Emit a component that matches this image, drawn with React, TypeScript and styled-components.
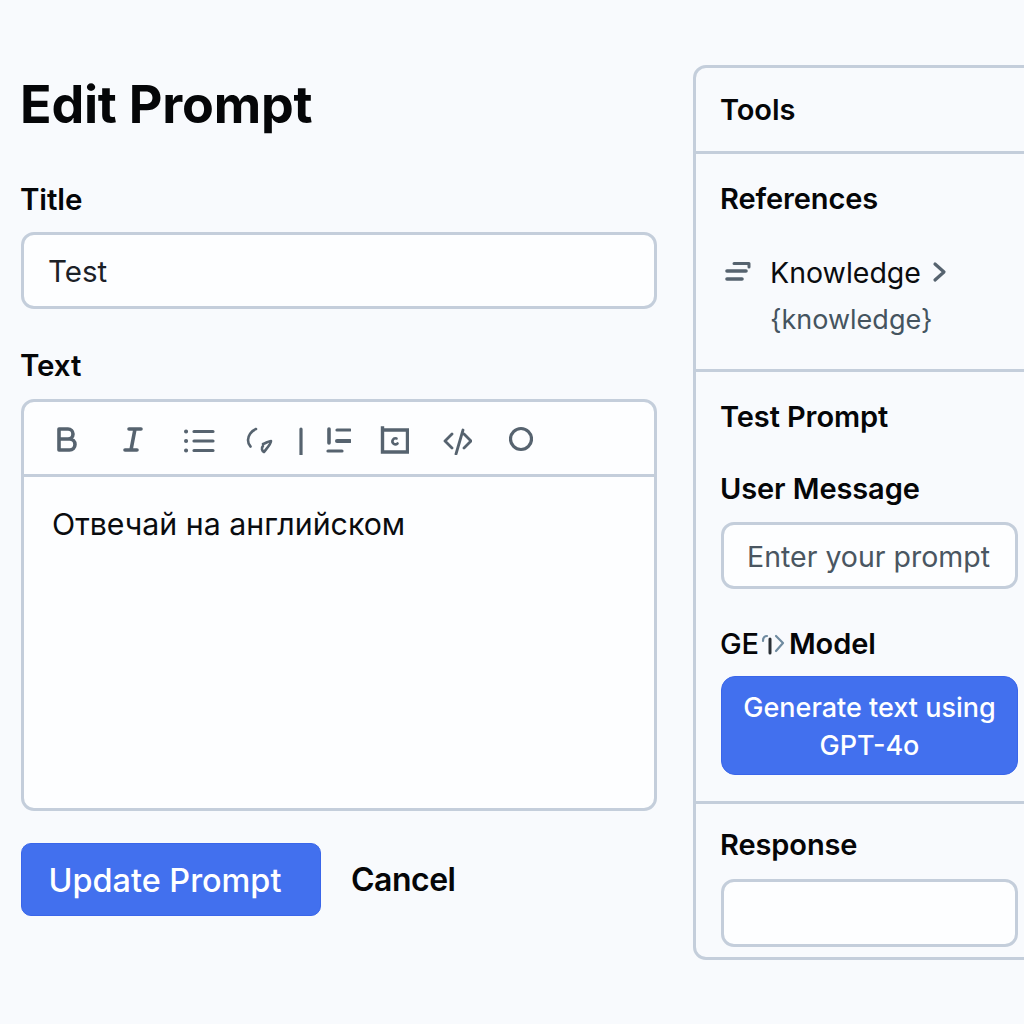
import React from 'react';
import styled, { createGlobalStyle } from 'styled-components';

const GlobalStyle = createGlobalStyle`
  html, body {
    margin: 0;
    padding: 0;
    background: #f8fafd;
    font-family: Inter, "Liberation Sans", sans-serif;
    color: #050608;
  }
  * { box-sizing: border-box; }
`;

const BORDER = '#c4cedb';
const ICON = '#56636f';

const Page = styled.div`
  width: 1024px;
  height: 1024px;
  overflow: hidden;
  display: flex;
  align-items: flex-start;
  gap: 36px;
  padding: 65px 0 0 21px;
`;

const Form = styled.div`
  width: 636px;
  flex-shrink: 0;
  display: flex;
  flex-direction: column;
`;

const Heading = styled.h1`
  margin: 9px 0 0 -1px;
  font-size: 52px;
  line-height: 62px;
  font-weight: 700;
  letter-spacing: -0.2px;
`;

const Label = styled.div<{ $top?: number }>`
  font-size: 29px;
  line-height: 34px;
  font-weight: 600;
  letter-spacing: -0.1px;
  margin-top: ${(p) => p.$top ?? 0}px;
`;

const FormLabel = styled(Label)`
  margin-left: -1px;
  font-size: 29.5px;
`;

const TitleInput = styled.div`
  margin-top: 16px;
  height: 77px;
  border: 3px solid ${BORDER};
  border-radius: 13px;
  background: #fdfeff;
  padding: 0 24px;
  display: flex;
  align-items: center;
  font-size: 29.5px;
  color: #1c2127;
`;

const Editor = styled.div`
  margin-top: 17px;
  height: 412px;
  border: 3px solid ${BORDER};
  border-radius: 13px;
  background: #fdfeff;
  display: flex;
  flex-direction: column;
`;

const Toolbar = styled.div`
  height: 75px;
  flex-shrink: 0;
  border-bottom: 3px solid ${BORDER};
  display: flex;
  align-items: center;
  padding: 1px 0 0 31px;
  color: ${ICON};
`;

const ToolIcon = styled.svg<{ $w: number; $gap: number }>`
  width: ${(p) => p.$w}px;
  height: 32px;
  margin-right: ${(p) => p.$gap}px;
  flex-shrink: 0;
  fill: none;
  stroke: currentColor;
  stroke-width: 3.2;
  stroke-linecap: round;
  stroke-linejoin: round;
`;

const EditorBody = styled.div`
  padding: 29px 28px;
  font-size: 30.3px;
  line-height: 36px;
  color: #0a0c0f;
`;

const Actions = styled.div`
  margin-top: 32px;
  display: flex;
  align-items: center;
  gap: 30px;
`;

const PrimaryButton = styled.button<{ $wide?: boolean }>`
  border: 1px solid #3a66ea;
  background: #4270ee;
  color: #fff;
  font-family: inherit;
  font-weight: 500;
  border-radius: ${(p) => (p.$wide ? 14 : 10)}px;
  width: ${(p) => (p.$wide ? 297 : 300)}px;
  height: ${(p) => (p.$wide ? 99 : 73)}px;
  font-size: ${(p) => (p.$wide ? 27 : 32.4)}px;
  line-height: ${(p) => (p.$wide ? 38 : 40)}px;
  padding: ${(p) => (p.$wide ? '3px 16px 0' : '2px 12px 0 0')};
`;

const CancelLink = styled.span`
  font-size: 32px;
  font-weight: 600;
  letter-spacing: -0.5px;
`;

const Panel = styled.aside`
  width: 360px;
  height: 895px;
  flex-shrink: 0;
  border: 3px solid ${BORDER};
  border-radius: 13px;
  display: flex;
  flex-direction: column;
`;

const Section = styled.section<{ $h: number; $top: number }>`
  height: ${(p) => p.$h}px;
  padding: ${(p) => p.$top}px 0 0 24px;
  flex-shrink: 0;
  & + & { border-top: 3px solid ${BORDER}; }
`;

const KnowledgeRow = styled.div`
  margin-top: 36px;
  display: flex;
  align-items: center;
  height: 40px;
  font-size: 28.5px;
  color: #0a0c0f;
`;

const KnowledgeIcon = styled.svg`
  width: 27px;
  height: 24px;
  margin-left: 4px;
  margin-right: 19px;
  fill: none;
  stroke: ${ICON};
  stroke-width: 3.6;
  stroke-linecap: round;
  stroke-linejoin: round;
`;

const Chevron = styled.svg`
  width: 16px;
  height: 24px;
  margin-left: 11px;
  fill: none;
  stroke: ${ICON};
  stroke-width: 3.2;
  stroke-linecap: round;
  stroke-linejoin: round;
`;

const KnowledgeTag = styled.div`
  margin: 10px 0 0 50px;
  font-size: 27px;
  line-height: 36px;
  color: #45545f;
`;

const FieldBox = styled.div<{ $h: number; $top: number }>`
  width: 297px;
  height: ${(p) => p.$h}px;
  margin: ${(p) => p.$top}px 0 0 1px;
  border: 3px solid ${BORDER};
  border-radius: 13px;
  background: #fdfeff;
  padding: 2px 23px 0;
  display: flex;
  align-items: center;
  font-size: 28.5px;
  color: #4a5661;
`;

const ModelLabel = styled(Label)`
  display: flex;
  align-items: center;
`;

const Light = styled.span`
  font-weight: 500;
`;

const Glitch = styled.svg`
  width: 26px;
  height: 24px;
  margin: 0 3px 0 1px;
  fill: none;
  stroke-width: 2.2;
  stroke-linecap: round;
  stroke-linejoin: round;
`;

const ButtonSlot = styled.div`
  margin: 15px 0 0 1px;
`;

export default function App() {
  return (
    <>
      <GlobalStyle />
      <Page>
        <Form>
          <Heading>Edit Prompt</Heading>
          <FormLabel $top={46}>Title</FormLabel>
          <TitleInput>Test</TitleInput>
          <FormLabel $top={39}>Text</FormLabel>
          <Editor>
            <Toolbar>
              <ToolIcon $w={24} $gap={44} viewBox="0 0 24 32">
                <path d="M4 6h9a5 5 0 0 1 0 10H4zM4 16h10.5a5.5 5.5 0 0 1 0 11H4z" strokeWidth="3.6" />
              </ToolIcon>
              <ToolIcon $w={20} $gap={41} viewBox="0 0 20 32">
                <path d="M6 6h12M2 27h12M12 6 8 27" strokeWidth="3.6" />
              </ToolIcon>
              <ToolIcon $w={32} $gap={30} viewBox="0 0 32 32">
                <path d="M10 8.5h19M10 18h19M10 27.5h19" />
                <path d="M2 8.5h.1M2 18h.1M2 27.5h.1" strokeWidth="4" />
              </ToolIcon>
              <ToolIcon $w={28} $gap={25} viewBox="0 0 28 32">
                <path d="M10 6C5 8 2 13 2 17c0 3 1 5 2.5 6.500" strokeWidth="2.6" />
                <path d="M17 21c3-1 6-3 8-3 0 3-4 7-7 11-2-1-3-4-1-6" strokeWidth="2.6" />
              </ToolIcon>
              <ToolIcon $w={4} $gap={23} viewBox="0 0 4 32">
                <path d="M2 6v26" />
              </ToolIcon>
              <ToolIcon $w={25} $gap={29} viewBox="0 0 25 32">
                <path d="M3 6v14" strokeWidth="3.6" />
                <path d="M11 7h13" />
                <path d="M11 18h13" strokeWidth="4" />
                <path d="M2 28h14" />
              </ToolIcon>
              <ToolIcon $w={29} $gap={34} viewBox="0 0 29 32">
                <path d="M2.500 7h25v22h-25zM2.500 7V5" strokeLinecap="square" strokeLinejoin="miter" strokeWidth="3.4" />
                <path d="M16.500 15.500a3 3 0 1 0 1 5" strokeWidth="2.6" />
              </ToolIcon>
              <ToolIcon $w={29} $gap={37} viewBox="0 0 29 32">
                <path d="M9 11 2 18l7 7M21 11l7 7-7 7M20 7l-7 24" strokeWidth="2.8" />
              </ToolIcon>
              <ToolIcon $w={24} $gap={0} viewBox="0 0 24 32">
                <circle cx="12" cy="16" r="10.5" />
              </ToolIcon>
            </Toolbar>
            <EditorBody>Отвечай на английском</EditorBody>
          </Editor>
          <Actions>
            <PrimaryButton>Update Prompt</PrimaryButton>
            <CancelLink>Cancel</CancelLink>
          </Actions>
        </Form>
        <Panel>
          <Section $h={83} $top={25}>
            <Label>Tools</Label>
          </Section>
          <Section $h={218} $top={28}>
            <Label>References</Label>
            <KnowledgeRow>
              <KnowledgeIcon viewBox="0 0 27 24">
                <path d="M10 3.500h15V7" strokeWidth="3" />
                <path d="M3 11h19M3 19h15" />
              </KnowledgeIcon>
              Knowledge
              <Chevron viewBox="0 0 16 24">
                <path d="m3 4 9 8-9 8" />
              </Chevron>
            </KnowledgeRow>
            <KnowledgeTag>{'{knowledge}'}</KnowledgeTag>
          </Section>
          <Section $h={432} $top={28}>
            <Label>Test Prompt</Label>
            <Label $top={38}>User Message</Label>
            <FieldBox $h={67} $top={16}>Enter your prompt</FieldBox>
            <ModelLabel $top={38}>
              <Light>GE</Light>
              <Glitch viewBox="0 0 26 24">
                <path d="M3 9c0-3 1.500-5 4-5" stroke="#6f8ba0" />
                <path d="M10 7v14" stroke="#2a3036" strokeWidth="3" />
                <path d="m16 4 7 7-7 8" stroke="#6f8ba0" />
              </Glitch>
              Model
            </ModelLabel>
            <ButtonSlot>
              <PrimaryButton $wide>Generate text using GPT-4o</PrimaryButton>
            </ButtonSlot>
          </Section>
          <Section $h={155} $top={24}>
            <Label>Response</Label>
            <FieldBox $h={68} $top={17} />
          </Section>
        </Panel>
      </Page>
    </>
  );
}
